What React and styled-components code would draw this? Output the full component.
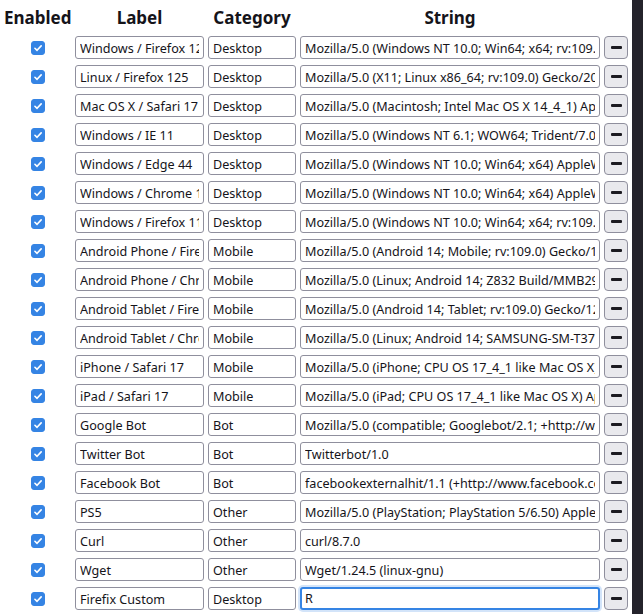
import React, { useState } from "react";
import styled, { createGlobalStyle } from "styled-components";

const GlobalStyle = createGlobalStyle`
  html, body {
    margin: 0;
    padding: 0;
    background: #ffffff;
    font-family: "Noto Sans", "DejaVu Sans", sans-serif;
    color: #15141a;
  }
`;

/// page frame: list area plus the dark strip down the right edge
const Page = styled.div`
  display: flex;
  height: 100vh;
  overflow: hidden;
`;

const Main = styled.main`
  flex: 1;
  min-width: 0;
`;

const Strip = styled.div`
  width: 11px;
  flex-shrink: 0;
  background: #24232b;
`;

const Table = styled.div`
  display: grid;
  grid-template-columns: 67px 129px 88px 300px 24px;
  column-gap: 4px;
  row-gap: 6px;
  padding-left: 4px;
  align-items: center;
`;

const Head = styled.div`
  padding-top: 6px;
  line-height: 24px;
  font-size: 17px;
  font-weight: 700;
  text-align: center;
  white-space: nowrap;
`;

const CheckCell = styled.label`
  display: flex;
  justify-content: center;
  padding-left: 1px;
`;

const Check = styled.input`
  appearance: none;
  margin: 0;
  width: 14px;
  height: 14px;
  border-radius: 3px;
  border: 1px solid #8f8f9d;
  background: #ffffff;
  cursor: pointer;

  &:checked {
    border-color: #3584e4;
    background-color: #3584e4;
    background-image: url("data:image/svg+xml,%3Csvg xmlns='http://www.w3.org/2000/svg' viewBox='0 0 14 14'%3E%3Cpath d='M3.4 7.3l2.5 2.4 4.8-5.2' fill='none' stroke='white' stroke-width='1.9' stroke-linecap='round' stroke-linejoin='round'/%3E%3C/svg%3E");
    background-size: 100% 100%;
  }
`;

const Field = styled.input`
  box-sizing: border-box;
  width: 100%;
  height: 23px;
  margin: 0;
  padding: 1px 4px 0;
  border: 1px solid #8f8f9d;
  border-radius: 3px;
  background: #ffffff;
  font-family: "Noto Sans", "DejaVu Sans", sans-serif;
  font-size: 12.6px;
  color: #15141a;
  outline: none;

  &:focus {
    border: 2px solid #3584e4;
    padding: 0 3px;
    box-shadow: 0 0 0 2px rgba(53, 132, 228, 0.22);
  }
`;

const RemoveButton = styled.button`
  box-sizing: border-box;
  width: 24px;
  height: 23px;
  margin: 0;
  padding: 0;
  display: flex;
  align-items: center;
  justify-content: center;
  border: 1px solid #8f8f9d;
  border-radius: 4px;
  background: #e9e9ed;
  cursor: pointer;

  span {
    display: block;
    width: 11px;
    height: 3px;
    border-radius: 1px;
    background: #1b1a20;
  }
`;

const initialRows = [
  ["Windows / Firefox 125", "Desktop", "Mozilla/5.0 (Windows NT 10.0; Win64; x64; rv:109.0) Gecko/20100101 Firefox/125.0"],
  ["Linux / Firefox 125", "Desktop", "Mozilla/5.0 (X11; Linux x86_64; rv:109.0) Gecko/20100101 Firefox/125.0"],
  ["Mac OS X / Safari 17", "Desktop", "Mozilla/5.0 (Macintosh; Intel Mac OS X 14_4_1) AppleWebKit/605.1.15 (KHTML, like Gecko) Version/17.4.1 Safari/605.1.15"],
  ["Windows / IE 11", "Desktop", "Mozilla/5.0 (Windows NT 6.1; WOW64; Trident/7.0; rv:11.0) like Gecko"],
  ["Windows / Edge 44", "Desktop", "Mozilla/5.0 (Windows NT 10.0; Win64; x64) AppleWebKit/537.36 (KHTML, like Gecko) Chrome/70.0.3538.102 Safari/537.36 Edge/18.19582"],
  ["Windows / Chrome 124", "Desktop", "Mozilla/5.0 (Windows NT 10.0; Win64; x64) AppleWebKit/537.36 (KHTML, like Gecko) Chrome/124.0.0.0 Safari/537.36"],
  ["Windows / Firefox 115 ESR", "Desktop", "Mozilla/5.0 (Windows NT 10.0; Win64; x64; rv:109.0) Gecko/20100101 Firefox/115.0"],
  ["Android Phone / Firefox 125", "Mobile", "Mozilla/5.0 (Android 14; Mobile; rv:109.0) Gecko/125.0 Firefox/125.0"],
  ["Android Phone / Chrome 124", "Mobile", "Mozilla/5.0 (Linux; Android 14; Z832 Build/MMB29M) AppleWebKit/537.36 (KHTML, like Gecko) Chrome/124.0.0.0 Mobile Safari/537.36"],
  ["Android Tablet / Firefox 125", "Mobile", "Mozilla/5.0 (Android 14; Tablet; rv:109.0) Gecko/125.0 Firefox/125.0"],
  ["Android Tablet / Chrome 124", "Mobile", "Mozilla/5.0 (Linux; Android 14; SAMSUNG-SM-T377A Build/NMF26X) AppleWebKit/537.36 (KHTML, like Gecko) Chrome/124.0.0.0 Mobile Safari/537.36"],
  ["iPhone / Safari 17", "Mobile", "Mozilla/5.0 (iPhone; CPU OS 17_4_1 like Mac OS X) AppleWebKit/605.1.15 (KHTML, like Gecko) Version/17.4.1 Mobile/15E148 Safari/604.1"],
  ["iPad / Safari 17", "Mobile", "Mozilla/5.0 (iPad; CPU OS 17_4_1 like Mac OS X) AppleWebKit/605.1.15 (KHTML, like Gecko) Version/17.4.1 Mobile/15E148 Safari/604.1"],
  ["Google Bot", "Bot", "Mozilla/5.0 (compatible; Googlebot/2.1; +http://www.google.com/bot.html)"],
  ["Twitter Bot", "Bot", "Twitterbot/1.0"],
  ["Facebook Bot", "Bot", "facebookexternalhit/1.1 (+http://www.facebook.com/externalhit_uatext.php)"],
  ["PS5", "Other", "Mozilla/5.0 (PlayStation; PlayStation 5/6.50) AppleWebKit/605.1.15 (KHTML, like Gecko)"],
  ["Curl", "Other", "curl/8.7.0"],
  ["Wget", "Other", "Wget/1.24.5 (linux-gnu)"],
  ["Firefix Custom", "Desktop", "R"],
].map(([label, category, string], i) => ({ id: i, enabled: true, label, category, string }));

const App = () => {
  const [rows, setRows] = useState(initialRows);

  // update a single field of one row
  const handleChange = (id, name, value) => {
    setRows(rows.map((row) => (row.id === id ? { ...row, [name]: value } : row)));
  };

  const removeRow = (id) => {
    setRows(rows.filter((row) => row.id !== id));
  };

  return (
    <>
      <GlobalStyle />
      <Page>
        <Main>
          <Table>
            <Head>Enabled</Head>
            <Head>Label</Head>
            <Head>Category</Head>
            <Head>String</Head>
            <div />
            {rows.map((row, i) => (
              <React.Fragment key={row.id}>
                <CheckCell>
                  <Check
                    type="checkbox"
                    checked={row.enabled}
                    onChange={(e) => handleChange(row.id, "enabled", e.target.checked)}
                  />
                </CheckCell>
                <Field
                  value={row.label}
                  onChange={(e) => handleChange(row.id, "label", e.target.value)}
                />
                <Field
                  value={row.category}
                  onChange={(e) => handleChange(row.id, "category", e.target.value)}
                />
                <Field
                  value={row.string}
                  autoFocus={i === rows.length - 1}
                  onChange={(e) => handleChange(row.id, "string", e.target.value)}
                />
                <RemoveButton type="button" onClick={() => removeRow(row.id)}>
                  <span />
                </RemoveButton>
              </React.Fragment>
            ))}
          </Table>
        </Main>
        <Strip />
      </Page>
    </>
  );
};

export default App;
